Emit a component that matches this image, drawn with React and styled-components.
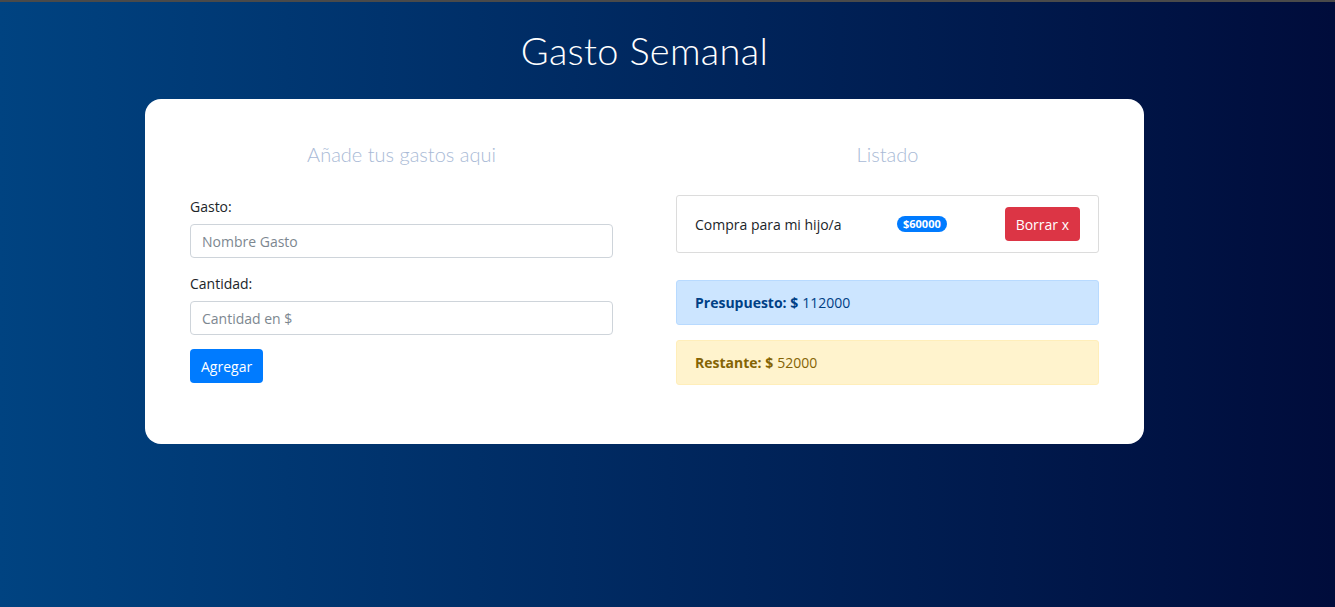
import styled, { createGlobalStyle } from "styled-components";

const GlobalStyle = createGlobalStyle`
  html, body {
    margin: 0;
    padding: 0;
  }
  body {
    font-family: "Open Sans", "Noto Sans", sans-serif;
    font-size: 14px;
    color: #212529;
  }
  * { box-sizing: border-box; }
`;

const Page = styled.div`
  min-height: 607px;
  border-top: 2px solid #4a4a4a;
  background: linear-gradient(to right, #004381, #00275e 50%, #000c3b);
  padding-top: 27px;
`;

const Main = styled.main`
  width: 1289px;
`;

const Title = styled.h1`
  margin: 0 0 28px;
  text-align: center;
  font-family: Lato, sans-serif;
  font-weight: 300;
  font-size: 38px;
  line-height: 42px;
  color: #fff;
  letter-spacing: 0.3px;
`;

const Card = styled.div`
  width: 999px;
  margin: 0 auto;
  background: #fff;
  border-radius: 16px;
  padding: 40px 45px 59px;
  display: grid;
  grid-template-columns: 423px 423px;
  column-gap: 63px;
  align-items: start;
`;

const Column = styled.div`
  display: flex;
  flex-direction: column;
`;

const Heading = styled.h2`
  margin: 0 0 26px;
  text-align: center;
  font-family: Lato, sans-serif;
  font-weight: 300;
  font-size: 20px;
  line-height: 30px;
  color: #a9bad6;
`;

const Field = styled.div`
  display: flex;
  flex-direction: column;
  margin-bottom: 14px;
`;

const Label = styled.label`
  line-height: 24px;
  margin-bottom: 5px;
`;

const Input = styled.input`
  height: 34px;
  border: 1px solid #ced4da;
  border-radius: 4px;
  padding: 0 11px;
  font-family: inherit;
  font-size: 14px;
  color: #495057;
  &::placeholder {
    color: #7d8790;
  }
`;

const Button = styled.button`
  height: 34px;
  padding: 0 11px;
  border: none;
  border-radius: 4px;
  font-family: inherit;
  font-size: 14px;
  color: #fff;
  background: ${(p) => (p.$danger ? "#dc3545" : "#007bff")};
  align-self: ${(p) => (p.$danger ? "center" : "flex-start")};
  cursor: pointer;
`;

const ListItem = styled.div`
  height: 58px;
  border: 1px solid #dcdcdc;
  border-radius: 3px;
  display: flex;
  align-items: center;
  padding: 0 18px;
  margin-bottom: 27px;
`;

const ItemName = styled.span`
  width: 202px;
`;

const Badge = styled.span`
  background: #007bff;
  color: #fff;
  font-size: 11px;
  font-weight: 700;
  line-height: 16px;
  padding: 0 6px;
  border-radius: 10px;
  margin-right: auto;
`;

const Alert = styled.div`
  height: 45px;
  display: flex;
  align-items: center;
  padding: 0 18px;
  border-radius: 3px;
  background: ${(p) => (p.$warning ? "#fff3cd" : "#cce5ff")};
  border: 1px solid ${(p) => (p.$warning ? "#ffeeba" : "#b8daff")};
  color: ${(p) => (p.$warning ? "#856404" : "#004085")};
  & + & {
    margin-top: 15px;
  }
  strong {
    margin-right: 4px;
  }
`;

export default function App() {
  return (
    <>
      <GlobalStyle />
      <Page>
        <Main>
          <Title>Gasto Semanal</Title>
          <Card>
            <Column>
              <Heading>Añade tus gastos aqui</Heading>
              <Field>
                <Label>Gasto:</Label>
                <Input placeholder="Nombre Gasto" />
              </Field>
              <Field>
                <Label>Cantidad:</Label>
                <Input placeholder="Cantidad en $" />
              </Field>
              <Button>Agregar</Button>
            </Column>
            <Column>
              <Heading>Listado</Heading>
              <ListItem>
                <ItemName>Compra para mi hijo/a</ItemName>
                <Badge>$60000</Badge>
                <Button $danger>Borrar x</Button>
              </ListItem>
              <Alert>
                <strong>Presupuesto: $</strong> 112000
              </Alert>
              <Alert $warning>
                <strong>Restante: $</strong> 52000
              </Alert>
            </Column>
          </Card>
        </Main>
      </Page>
    </>
  );
}
